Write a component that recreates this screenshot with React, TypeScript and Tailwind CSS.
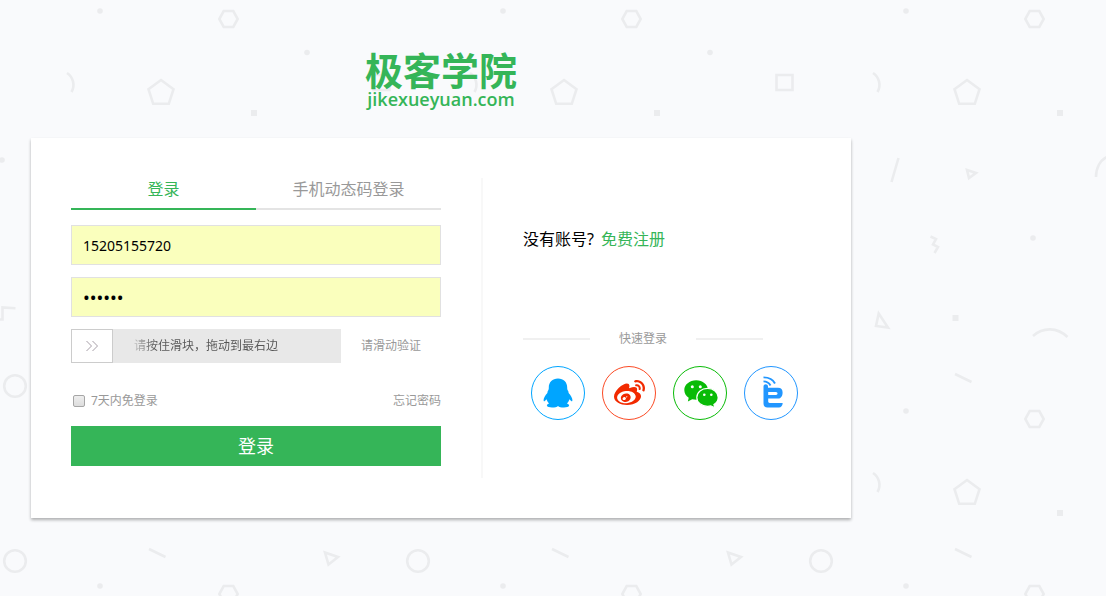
import { useState } from "react";
import type { ReactNode } from "react";
import { FaWeibo } from "react-icons/fa";

type Point = [number, number];

const TILE = 403;
const repeat = (x: number, y: number, count: number): Point[] =>
  Array.from({ length: count }, (_, i): Point => [x + i * TILE, y]);

const dots: Point[] = [...repeat(100, 11, 3), ...repeat(307, 52.5, 2), [2, 160], [1033, 238], [906, 411], ...repeat(100, 586, 3)];
const hexagons: Point[] = [...repeat(228.5, 19, 3), [1034.5, 419], ...repeat(228.5, 594, 3)];
const pentagons: Point[] = [...repeat(161, 93, 3), [967, 493]];
const arcs: Point[] = [...repeat(67, 73, 3), [873, 473]];
const squares: Point[] = [...repeat(254, 113, 3), [955.5, 318], [1060, 513]];
const frames: Point[] = repeat(381.5, 82.5, 2);
const circles: Point[] = [[15, 386], ...repeat(15, 561, 3)];
const dashes: Point[] = [[955, 374], ...repeat(149, 549, 3)];
const triangles: Point[] = repeat(324, 551, 2);

function Backdrop() {
  const at = ([x, y]: Point) => `translate(${x} ${y})`;
  return (
    <svg aria-hidden="true" className="pointer-events-none absolute inset-0 h-full w-full" fill="none" stroke="#ebecee" strokeWidth="2.6">
      {dots.map((p, i) => <circle key={i} transform={at(p)} r="2.8" fill="#ebecee" stroke="none" />)}
      {squares.map((p, i) => <path key={i} transform={at(p)} d="M-3-3H3V3H-3Z" fill="#ebecee" stroke="none" />)}
      {hexagons.map((p, i) => <path key={i} transform={at(p)} d="M-4.8-8H4.8L9.2 0L4.8 8H-4.8L-9.2 0Z" />)}
      {pentagons.map((p, i) => <path key={i} transform={at(p)} d="M0-13L12.5-3.8L7.8 10.8H-7.8L-12.5-3.8Z" />)}
      {arcs.map((p, i) => <path key={i} transform={at(p)} d="M0 0C6 4 8.500 12 4.500 19" />)}
      {frames.map((p, i) => <path key={i} transform={at(p)} d="M-8-7.500H8V7.500H-8Z" />)}
      {circles.map((p, i) => <circle key={i} transform={at(p)} r="10.800" />)}
      {dashes.map((p, i) => <path key={i} transform={at(p)} d="M0 0L16.500 8" />)}
      {triangles.map((p, i) => <path key={i} transform={at(p)} d="M1 1.500L14 6L4.500 13.500Z" />)}
      <path d="M898.500 158L891.500 182M967 170L976 173L969 178ZM1096 177C1096 168 1100 160 1107 157" />
      <path d="M930.500 236.500L936 239L933 244.500L938 247L934.500 253M878.700 313.500L888 327.500L876 326ZM1033 336C1043 327 1057 327 1067.500 337M-1 319.500H2.500V307.500L15.500 308.300" />
    </svg>
  );
}

function QqIcon() {
  return (
    <svg viewBox="0 0 30 30" className="size-[30px]" fill="#00a5ff" aria-hidden="true">
      <path d="M15 .5C9.400.500 5.800 4.300 5.800 9.500C5.800 11 5.700 11.800 5 12.800C4.500 13.500 4.400 14.200 4.400 15C2.200 17.500.600 20 .600 22C.600 23.500 1.200 23.500 1.900 22.900L3.500 21.300C4 23 4.800 24.400 6 25.500C4.500 26 3.800 26.700 3.900 27.500C4.100 29 6.500 29.400 9 29.400C11.800 29.400 14 28.900 15 27.900C16 28.900 18.200 29.400 21 29.400C23.500 29.400 25.900 29 26.100 27.500C26.200 26.700 25.500 26 24 25.500C25.200 24.400 26 23 26.500 21.300L28.100 22.900C28.800 23.500 29.400 23.500 29.400 22C29.400 20 27.800 17.500 25.600 15C25.600 14.200 25.500 13.500 25 12.800C24.300 11.800 24.200 11 24.200 9.500C24.200 4.300 20.600.500 15 .500Z" />
    </svg>
  );
}

function WechatIcon() {
  return (
    <svg viewBox="-2 0 36 30" className="h-[30px] w-9" aria-hidden="true">
      <path fill="#09bb07" d="M12.200 2.200C5.500 2.200.300 6.700.300 12C.300 15.200 2 18 4.700 19.800L3.900 23.500L8.200 21.300C9.400 21.600 10.800 21.800 12.200 21.800C18.800 21.800 24 17.400 24 12C24 6.700 18.800 2.200 12.200 2.200Z" />
      <path fill="#09bb07" stroke="#fff" strokeWidth="1.200" d="M23.500 10.300C17.700 10.300 12.800 14.300 12.800 19.400C12.800 24.600 17.700 28.300 23.500 28.300C24.700 28.300 25.800 28.200 26.800 27.900L30.900 29.700L29.900 26.400C32.500 24.800 34.200 22.300 34.200 19.400C34.200 14.300 29.300 10.300 23.500 10.300Z" />
      <g fill="#fff">
        <circle cx="8.300" cy="8.800" r="1.500" />
        <circle cx="16.300" cy="8.800" r="1.500" />
        <circle cx="20.300" cy="16.800" r="1.300" />
        <circle cx="27.300" cy="16.800" r="1.300" />
      </g>
    </svg>
  );
}

function SignalEIcon() {
  return (
    <svg viewBox="-3 0 23 34" className="h-[34px] w-[23px]" fill="none" stroke="#2196ff" aria-hidden="true">
      <path strokeWidth="1.900" d="M.500 1.400C6 1.400 10.200 3.800 12 7.500M.500 5.400C3.800 5.400 6 6.800 7.500 9.500" />
      <path fill="#2196ff" stroke="none" fillRule="evenodd" d="M.500 10.500C.500 7.400 5 7.400 5 10.500V11.700H15C18.200 11.700 19.600 13.500 19.600 16.500C19.600 20 18 22.600 15 22.600H5.200V25.300C5.200 26.500 5.700 27 6.700 27H19.700C19.500 30 18 31.400 16 31.400H4.500C2 31.400.500 30 .500 27.500ZM5.200 15.900V18.900H13C15 18.900 15 15.900 13 15.900Z" />
    </svg>
  );
}

function SocialLink({ label, border, children }: { label: string; border: string; children: ReactNode }) {
  return (
    <a href="#" aria-label={label} className={`flex size-[54px] items-center justify-center rounded-full border ${border}`}>
      {children}
    </a>
  );
}

const field = "h-10 w-full border border-[#e1e1e1] bg-[#faffbd] px-[11px] text-black outline-none";

function LoginForm() {
  const [phone, setPhone] = useState("15205155720");
  const [password, setPassword] = useState("123456");
  const [slide, setSlide] = useState(0);

  return (
    <form className="w-[370px]" onSubmit={(e) => e.preventDefault()}>
      <div role="tablist" className="flex text-base leading-5 text-[#999]">
        <button type="button" role="tab" aria-selected="true" className="h-8 flex-1 border-b-2 border-[#35b558] pb-2 text-[#35b558]">登录</button>
        <button type="button" role="tab" aria-selected="false" className="h-8 flex-1 border-b-2 border-[#e4e4e4] pb-2">手机动态码登录</button>
      </div>
      <div className="mt-[15px] flex flex-col gap-3">
        <input aria-label="手机号" className={`${field} text-sm`} value={phone} onChange={(e) => setPhone(e.target.value)} />
        <input aria-label="密码" type="password" className={`${field} text-lg`} value={password} onChange={(e) => setPassword(e.target.value)} />
        <div className="flex items-center gap-5 text-xs">
          <div className="relative h-[34px] w-[270px]">
            <input
              id="slide"
              type="range"
              min="0"
              max="100"
              value={slide}
              onChange={(e) => setSlide(Number(e.target.value))}
              className="block h-full w-full appearance-none bg-[#e8e8e8] outline-none [&::-webkit-slider-thumb]:h-[34px] [&::-webkit-slider-thumb]:w-[42px] [&::-webkit-slider-thumb]:appearance-none [&::-webkit-slider-thumb]:border [&::-webkit-slider-thumb]:border-[#ccc] [&::-webkit-slider-thumb]:bg-white"
            />
            <label htmlFor="slide" className="pointer-events-none absolute inset-0 flex items-center justify-center">
              <span className="bg-linear-to-r from-[#c4c4c4] via-[#555] via-15% to-[#555] bg-clip-text text-transparent">请按住滑块，拖动到最右边</span>
            </label>
            <svg viewBox="0 0 42 34" className="pointer-events-none absolute inset-y-0 left-0 w-[42px]" style={{ marginLeft: slide * 2.28 }} fill="none" stroke="#a79fa8" aria-hidden="true">
              <path d="M15.500 12L20.500 17L15.500 22M21.500 12L26.500 17L21.500 22" />
            </svg>
          </div>
          <span className="text-[#999]">请滑动验证</span>
        </div>
      </div>
      <div className="mt-7 flex h-5 items-center justify-between text-xs text-[#999]">
        <label className="flex items-center gap-1.5">
          <input type="checkbox" className="ml-0.5 size-3 appearance-none rounded-xs border border-[#a6a6a6] bg-linear-to-b from-[#eee] to-[#ddd] checked:bg-[#35b558]" />
          7天内免登录
        </label>
        <a href="#">忘记密码</a>
      </div>
      <button type="submit" className="mt-[15px] h-10 w-full bg-[#35b558] text-lg text-white">登录</button>
    </form>
  );
}

export default function App() {
  return (
    <div className="relative min-h-screen overflow-hidden bg-[#f9fafc] px-[31px] pb-10 font-['Noto_Sans','Noto_Sans_CJK_SC',sans-serif]">
      <Backdrop />
      <div className="relative max-w-[820px]">
        <header className="flex h-[138px] flex-col items-center pt-[52px] text-[#35b558]">
          <h1 className="text-[38px] leading-9 font-bold">极客学院</h1>
          <p className="font-['Open_Sans','Noto_Sans',sans-serif] text-lg leading-[22px] font-semibold">jikexueyuan.com</p>
        </header>
        <main className="flex min-h-[380px] bg-white p-10 shadow-[0_2px_3px_rgba(0,0,0,0.3)]">
          <LoginForm />
          <section className="ml-10 flex-1 border-l-2 border-[#f8f8f8] pl-10">
            <p className="mt-[49px] flex gap-[7px] text-base leading-6 text-black">
              没有账号?
              <a href="#" className="text-[#35b558]">免费注册</a>
            </p>
            <div className="mt-[78px] flex items-center gap-[29px] text-xs leading-5 text-[#999]">
              <span className="h-0.5 w-[67px] bg-[#f0f0f0]" />
              快速登录
              <span className="h-0.5 w-[67px] bg-[#f0f0f0]" />
            </div>
            <nav aria-label="快速登录" className="mt-[17px] ml-2 flex gap-[17px]">
              <SocialLink label="QQ" border="border-[#00a5ff]"><QqIcon /></SocialLink>
              <SocialLink label="微博" border="border-[#fb4a24]"><FaWeibo className="size-[31px] text-[#f22a00]" /></SocialLink>
              <SocialLink label="微信" border="border-[#09bb07]"><WechatIcon /></SocialLink>
              <SocialLink label="E" border="border-[#2196ff]"><SignalEIcon /></SocialLink>
            </nav>
          </section>
        </main>
      </div>
    </div>
  );
}
